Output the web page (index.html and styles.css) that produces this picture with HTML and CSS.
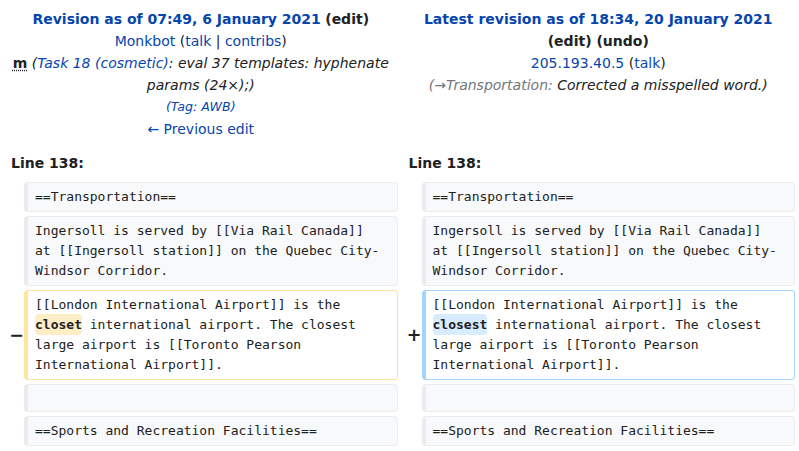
FILE: index.html
```html
<!DOCTYPE html>
<html lang="en">
<head>
<meta charset="utf-8">
<title>Diff</title>
<link rel="stylesheet" href="styles.css">
</head>
<body>
<div class="diff">
  <div class="title">
    <div class="rev"><a class="link strong" href="#">Revision as of 07:49, 6 January 2021</a> <span class="strong">(<span>edit</span>)</span></div>
    <div><a class="link" href="#">Monkbot</a> (<a class="link" href="#">talk</a> | <a class="link" href="#">contribs</a>)</div>
    <div><abbr class="minor" title="This is a minor edit">m</abbr> <span class="comment">(<a class="link" href="#">Task 18 (cosmetic)</a>: eval 37 templates: hyphenate params (24×);)</span></div>
    <div class="tags">(<a class="link" href="#">Tag</a>: AWB)</div>
    <div><a class="link" href="#">← Previous edit</a></div>
  </div>
  <div class="title">
    <div class="rev"><a class="link strong" href="#">Latest revision as of 18:34, 20 January 2021</a> <span class="strong">(<span>edit</span>) (<span>undo</span>)</span></div>
    <div><a class="link" href="#">205.193.40.5</a> (<a class="link" href="#">talk</a>)</div>
    <div><span class="comment"><span class="auto">(→Transportation:</span> Corrected a misspelled word.)</span></div>
  </div>

  <div class="lineno">Line 138:</div>
  <div class="lineno">Line 138:</div>

  <div class="marker"></div>
  <div class="line ctx">==Transportation==</div>
  <div class="marker"></div>
  <div class="line ctx">==Transportation==</div>

  <div class="marker"></div>
  <div class="line ctx">Ingersoll is served by [[Via Rail Canada]] at [[Ingersoll station]] on the Quebec City-Windsor Corridor.</div>
  <div class="marker"></div>
  <div class="line ctx">Ingersoll is served by [[Via Rail Canada]] at [[Ingersoll station]] on the Quebec City-Windsor Corridor.</div>

  <div class="marker">−</div>
  <div class="line del">[[London International Airport]] is the <span class="change del-change">closet</span> international airport. The closest large airport is [[Toronto Pearson International Airport]].</div>
  <div class="marker">+</div>
  <div class="line add">[[London International Airport]] is the <span class="change add-change">closest</span> international airport. The closest large airport is [[Toronto Pearson International Airport]].</div>

  <div class="marker"></div>
  <div class="line ctx empty"></div>
  <div class="marker"></div>
  <div class="line ctx empty"></div>

  <div class="marker"></div>
  <div class="line ctx">==Sports and Recreation Facilities==</div>
  <div class="marker"></div>
  <div class="line ctx">==Sports and Recreation Facilities==</div>
</div>
</body>
</html>
```

FILE: styles.css
```css
* { box-sizing: border-box; }
html, body { margin: 0; padding: 0; background: #fff; }
body {
  font-family: "DejaVu Sans", sans-serif;
  font-size: 14px;
  line-height: 22px;
  color: #202122;
}
.diff {
  display: grid;
  grid-template-columns: 16px 1fr 16px 1fr;
  gap: 4px;
  padding: 4px;
}
.title {
  grid-column: span 2;
  text-align: center;
  padding: 4px 7px;
  align-self: start;
}
.link { color: #0645ad; text-decoration: none; }
.strong { font-weight: bold; }
.minor {
  font-weight: bold;
  font-style: normal;
  text-decoration: underline dotted;
  text-underline-offset: 2px;
}
.comment { font-style: italic; }
.auto { color: #72777d; }
.tags { font-style: italic; font-size: 12.6px; color: #0645ad; }
.lineno {
  grid-column: span 2;
  font-weight: bold;
  padding: 4px 7px;
}
.marker {
  font-weight: bold;
  font-size: 17.5px;
  line-height: 21px;
  text-align: right;
  align-self: center;
  margin-right: -4px;
}
.line {
  font-family: "DejaVu Sans Mono", monospace;
  font-size: 13px;
  line-height: 20px;
  padding: 4px 12px 4px 7px;
  border: 1px solid #eaecf0;
  border-left-width: 4px;
  border-radius: 4px;
  min-height: 30px;
}
.ctx { background: #f8f9fa; border-color: #eaecf0; }
.del { background: #fff; border-color: #ffe49c; }
.add { background: #fff; border-color: #a3d3ff; }
.empty { min-height: 28px; }
.change {
  font-weight: bold;
  border-radius: 4px;
  padding: 3px 0;
}
.del-change { background: #feeec8; }
.add-change { background: #d8ecff; }
```
